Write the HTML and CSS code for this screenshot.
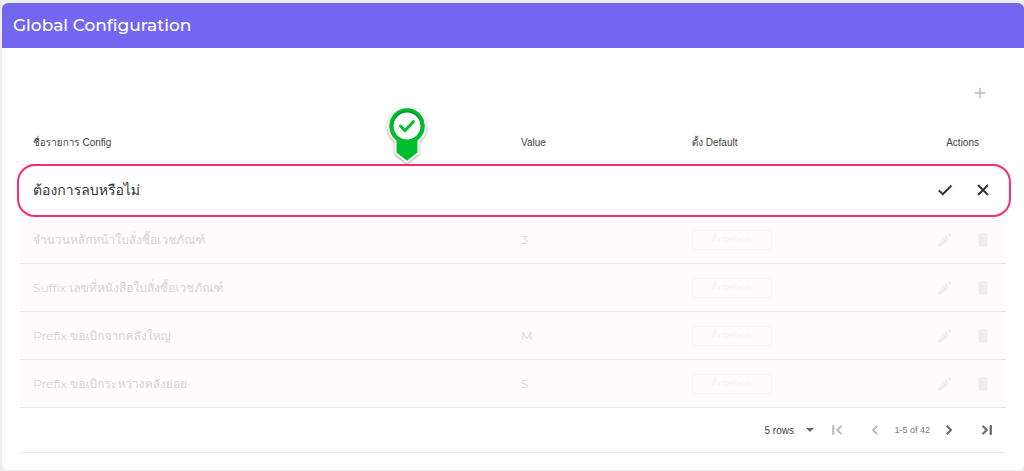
FILE: index.html
```html
<!DOCTYPE html>
<html lang="th">
<head>
    <meta charset="UTF-8">
    <meta name="viewport" content="width=device-width, initial-scale=1.0">
    <title>Global Configuration</title>
    <link rel="stylesheet" href="styles.css">
</head>
<body>
    <!-- Shared icons -->
    <svg class="icon-defs" aria-hidden="true">
        <symbol id="icon-add" viewBox="0 0 24 24"><path d="M19 13h-6v6h-2v-6H5v-2h6V5h2v6h6z"/></symbol>
        <symbol id="icon-check" viewBox="0 0 24 24"><path d="M9 16.17L4.83 12l-1.42 1.41L9 19 21 7l-1.41-1.41z"/></symbol>
        <symbol id="icon-close" viewBox="0 0 24 24"><path d="M19 6.41L17.59 5 12 10.59 6.41 5 5 6.41 10.59 12 5 17.59 6.41 19 12 13.41 17.59 19 19 17.59 13.41 12z"/></symbol>
        <symbol id="icon-edit" viewBox="0 0 24 24"><path d="M3 17.25V21h3.75L17.81 9.94l-3.75-3.75L3 17.25zM20.71 7.04c.39-.39.39-1.02 0-1.41l-2.34-2.34c-.39-.39-1.02-.39-1.41 0l-1.83 1.83 3.75 3.75 1.83-1.83z"/></symbol>
        <symbol id="icon-delete" viewBox="0 0 24 24"><path d="M6 19c0 1.1.9 2 2 2h8c1.1 0 2-.9 2-2V7H6v12zM19 4h-3.5l-1-1h-5l-1 1H5v2h14V4z"/></symbol>
        <symbol id="icon-first" viewBox="0 0 24 24"><path d="M18.41 16.59L13.82 12l4.59-4.59L17 6l-6 6 6 6zM6 6h2v12H6z"/></symbol>
        <symbol id="icon-prev" viewBox="0 0 24 24"><path d="M15.41 7.41L14 6l-6 6 6 6 1.41-1.41L10.83 12z"/></symbol>
        <symbol id="icon-next" viewBox="0 0 24 24"><path d="M10 6L8.59 7.41 13.17 12l-4.58 4.59L10 18l6-6z"/></symbol>
        <symbol id="icon-last" viewBox="0 0 24 24"><path d="M5.59 7.41L10.18 12l-4.59 4.59L7 18l6-6-6-6zM16 6h2v12h-2z"/></symbol>
        <symbol id="icon-down" viewBox="0 0 24 24"><path d="M6 9l6 6 6-6z"/></symbol>
    </svg>

    <main class="card">
        <header class="card-header">
            <h1 class="card-title">Global Configuration</h1>
        </header>

        <div class="card-body">
            <div class="toolbar">
                <button class="icon-btn muted" type="button" aria-label="Add"><svg><use href="#icon-add"/></svg></button>
            </div>

            <table class="config-table">
                <colgroup>
                    <col class="col-name">
                    <col class="col-value">
                    <col class="col-default">
                    <col class="col-actions">
                </colgroup>
                <thead>
                    <tr>
                        <th>ชื่อรายการ Config</th>
                        <th>Value</th>
                        <th>ตั้ง Default</th>
                        <th class="actions-head">Actions</th>
                    </tr>
                </thead>
                <tbody>
                    <tr class="confirm-row">
                        <td colspan="3">
                            ต้องการลบหรือไม่
                            <span class="confirm-outline"></span>
                            <svg class="pin" viewBox="0 0 44 60" aria-hidden="true">
                                <path class="pin-edge" d="M22 1a19 19 0 0 0-11.500 34v12L22 56l11.500-9V35A19 19 0 0 0 22 1z"/>
                                <circle class="pin-face" cx="22" cy="20" r="13.500"/>
                                <path class="pin-check" d="M15.500 20l4.500 4.500 8.500-9"/>
                            </svg>
                        </td>
                        <td>
                            <div class="actions">
                                <button class="icon-btn" type="button" aria-label="Confirm"><svg><use href="#icon-check"/></svg></button>
                                <button class="icon-btn" type="button" aria-label="Cancel"><svg><use href="#icon-close"/></svg></button>
                            </div>
                        </td>
                    </tr>
                    <tr class="config-row">
                        <td>จำนวนหลักหน้าใบสั่งซื้อเวชภัณฑ์</td>
                        <td>3</td>
                        <td><button class="default-btn" type="button">ตั้ง Default</button></td>
                        <td>
                            <div class="actions">
                                <button class="icon-btn" type="button" aria-label="Edit"><svg><use href="#icon-edit"/></svg></button>
                                <button class="icon-btn" type="button" aria-label="Delete"><svg><use href="#icon-delete"/></svg></button>
                            </div>
                        </td>
                    </tr>
                    <tr class="config-row">
                        <td>Suffix เลขที่หนังสือใบสั่งซื้อเวชภัณฑ์</td>
                        <td></td>
                        <td><button class="default-btn" type="button">ตั้ง Default</button></td>
                        <td>
                            <div class="actions">
                                <button class="icon-btn" type="button" aria-label="Edit"><svg><use href="#icon-edit"/></svg></button>
                                <button class="icon-btn" type="button" aria-label="Delete"><svg><use href="#icon-delete"/></svg></button>
                            </div>
                        </td>
                    </tr>
                    <tr class="config-row">
                        <td>Prefix ขอเบิกจากคลังใหญ่</td>
                        <td>M</td>
                        <td><button class="default-btn" type="button">ตั้ง Default</button></td>
                        <td>
                            <div class="actions">
                                <button class="icon-btn" type="button" aria-label="Edit"><svg><use href="#icon-edit"/></svg></button>
                                <button class="icon-btn" type="button" aria-label="Delete"><svg><use href="#icon-delete"/></svg></button>
                            </div>
                        </td>
                    </tr>
                    <tr class="config-row">
                        <td>Prefix ขอเบิกระหว่างคลังย่อย</td>
                        <td>S</td>
                        <td><button class="default-btn" type="button">ตั้ง Default</button></td>
                        <td>
                            <div class="actions">
                                <button class="icon-btn" type="button" aria-label="Edit"><svg><use href="#icon-edit"/></svg></button>
                                <button class="icon-btn" type="button" aria-label="Delete"><svg><use href="#icon-delete"/></svg></button>
                            </div>
                        </td>
                    </tr>
                </tbody>
            </table>

            <nav class="pagination" aria-label="Pagination">
                <label class="rows-select">
                    <select aria-label="Rows per page">
                        <option>5 rows</option>
                        <option>10 rows</option>
                        <option>20 rows</option>
                    </select>
                    <svg><use href="#icon-down"/></svg>
                </label>
                <button class="icon-btn" type="button" aria-label="First page" disabled><svg><use href="#icon-first"/></svg></button>
                <button class="icon-btn" type="button" aria-label="Previous page" disabled><svg><use href="#icon-prev"/></svg></button>
                <span class="page-info">1-5 of 42</span>
                <button class="icon-btn" type="button" aria-label="Next page"><svg><use href="#icon-next"/></svg></button>
                <button class="icon-btn" type="button" aria-label="Last page"><svg><use href="#icon-last"/></svg></button>
            </nav>
        </div>
    </main>
</body>
</html>
```
FILE: styles.css
```css
:root {
    --primary: #7367f0;
    --highlight: #fa2e6d;
    --pin: #00bf2f;
    --line: #e8e7e9;
    --text: #333;
    --thai: Tahoma, Loma, Waree, "Noto Sans Thai Looped", Garuda, "Noto Sans Thai";
}

* {
    box-sizing: border-box;
}

body {
    margin: 0;
    padding: 3px 0 1px 2px;
    background: #eee;
    color: var(--text);
    font-family: "Liberation Sans", var(--thai), sans-serif;
    font-size: 12px;
}

.icon-defs {
    position: absolute;
    width: 0;
    height: 0;
}

/* Card */
.card {
    background: #fff;
    border-radius: 6px;
    overflow: hidden;
}

.card-header {
    padding: 11px;
    background: var(--primary);
}

.card-title {
    margin: 0;
    color: #fff;
    font-family: Montserrat, Inter, sans-serif;
    font-size: 17px;
    font-weight: 500;
    font-variant-ligatures: none;
    line-height: 23px;
}

.card-body {
    padding: 26px 18px 17px;
}

.toolbar {
    display: flex;
    justify-content: flex-end;
    padding: 0 7px;
}

/* Buttons */
.icon-btn {
    display: flex;
    align-items: center;
    justify-content: center;
    width: 38px;
    height: 38px;
    padding: 0;
    border: 0;
    background: transparent;
    color: inherit;
    cursor: pointer;
}

.icon-btn svg {
    width: 18px;
    height: 18px;
    fill: currentColor;
}

.icon-btn.muted {
    color: #bdbdbd;
}

.icon-btn:disabled {
    color: #bdbdbd;
    cursor: default;
}

/* Table */
.config-table {
    width: 100%;
    table-layout: fixed;
    border-collapse: separate;
    border-spacing: 0;
}

.col-name { width: 49.5%; }
.col-value { width: 17.3%; }
.col-default { width: 24.8%; }
.col-actions { width: 8.4%; }

.config-table th,
.config-table td {
    padding: 0 13px;
    border-bottom: 1px solid var(--line);
    text-align: left;
    white-space: nowrap;
}

.config-table th {
    height: 53px;
    padding-top: 8px;
    color: #444;
    font-size: 10px;
    font-weight: 400;
}

.config-table .actions-head {
    text-align: right;
    padding-right: 27px;
}

.config-table td:last-child {
    padding: 0 4px 0 0;
}

.actions {
    display: flex;
    justify-content: flex-end;
}

/* Delete confirmation */
.confirm-row {
    position: relative;
}

.confirm-row td {
    height: 51px;
    font-size: 14px;
}

.confirm-row .icon-btn svg {
    stroke: currentColor;
}

.confirm-outline {
    position: absolute;
    inset: -1px -5px -1px -3px;
    border: 2px solid var(--highlight);
    border-radius: 18px;
    pointer-events: none;
}

.pin {
    position: absolute;
    bottom: 50px;
    left: 37%;
    width: 44px;
    height: 60px;
    filter: drop-shadow(0 1px 1px rgba(0, 0, 0, 0.4));
}

.pin-edge {
    fill: var(--pin);
    stroke: #fff;
    stroke-width: 2;
}

.pin-face {
    fill: #fff;
    filter: drop-shadow(0 -1px 1px rgba(0, 0, 0, 0.4));
}

.pin-check {
    fill: none;
    stroke: var(--pin);
    stroke-width: 3;
    stroke-linecap: round;
}

/* Config rows */
.config-row td {
    height: 48px;
    background: #fffbfc;
    color: #d4d3d5;
    font-family: Montserrat, Inter, var(--thai), sans-serif;
    font-size: 12px;
    font-variant-ligatures: none;
}

.config-row .icon-btn {
    color: #eeecee;
}

.default-btn {
    display: block;
    width: 80px;
    height: 20px;
    padding: 0;
    border: 1px solid #f5f5f7;
    border-radius: 3px;
    background: transparent;
    color: #f1f2f3;
    font-family: inherit;
    font-size: 8px;
    cursor: pointer;
}

/* Pagination */
.pagination {
    display: flex;
    align-items: center;
    justify-content: flex-end;
    height: 45px;
    border-bottom: 1px solid var(--line);
    color: #666;
}

.pagination .icon-btn svg {
    stroke: currentColor;
}

.rows-select {
    display: flex;
    align-items: center;
    gap: 8px;
}

.rows-select select {
    appearance: none;
    width: 30px;
    padding: 0;
    border: 0;
    background: transparent;
    color: #444;
    font-family: inherit;
    font-size: 10px;
}

.rows-select svg {
    width: 16px;
    height: 16px;
    fill: #666;
}

.page-info {
    color: #777;
    font-size: 9px;
}
```
